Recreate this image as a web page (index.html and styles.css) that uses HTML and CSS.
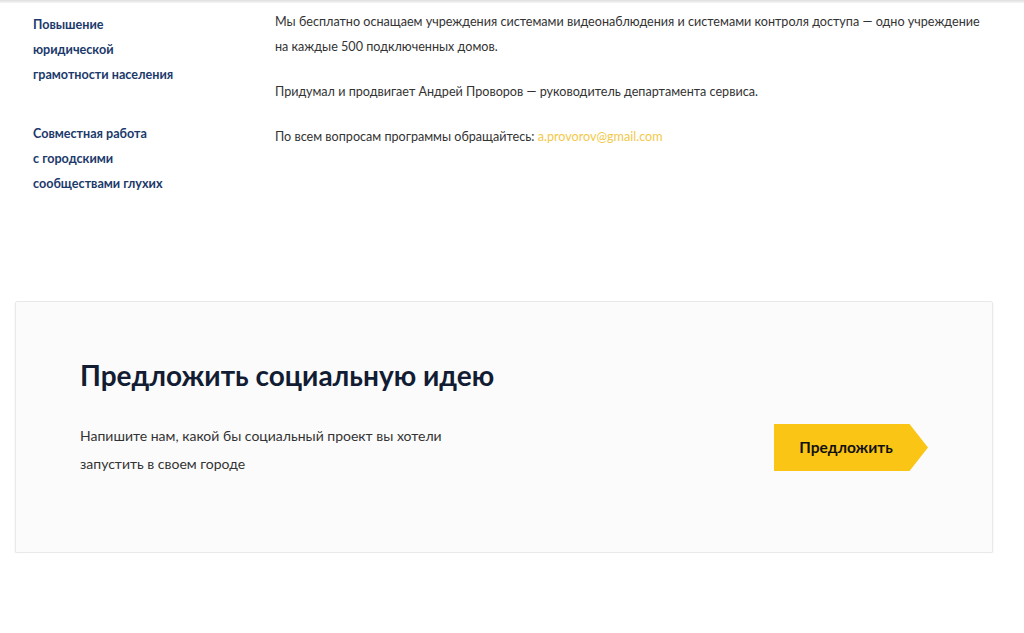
FILE: index.html
```html
<!DOCTYPE html>
<html>
	<head>
		<meta charset="utf-8">
		<title>Социальные проекты</title>
		<link rel="stylesheet" href="styles.css">
	</head>
	<body>
		<!-- тень от шапки -->
		<div class="topShadow"></div>

		<!-- описание проекта -->
		<div class="info">
			<div class="infoTags">
				<div class="tag">Повышение<br>юридической<br>грамотности населения</div>
				<div class="tag">Совместная работа<br>с городскими<br>сообществами глухих</div>
			</div>
			<div class="infoText">
				<p>Мы бесплатно оснащаем учреждения системами видеонаблюдения и системами контроля доступа — одно учреждение на каждые 500 подключенных домов.</p>
				<p>Придумал и продвигает Андрей Проворов — руководитель департамента сервиса.</p>
				<p>По всем вопросам программы обращайтесь: <a href="javascript:;">a.provorov@gmail.com</a></p>
			</div>
		</div>

		<!-- блок предложения идеи -->
		<div class="idea">
			<div class="ideaText">
				<h2>Предложить социальную идею</h2>
				<p>Напишите нам, какой бы социальный проект вы хотели запустить в своем городе</p>
			</div>
			<a class="ideaBtn" href="javascript:;">Предложить</a>
		</div>
	</body>
</html>
```

FILE: styles.css
```css
*{
	margin: 0px;padding: 0px;
}
body{
	background-color: #fff;
	font-family: Lato, "Open Sans", sans-serif;
	color: #333;
}
.topShadow{
	height: 3px;
	background: linear-gradient(#dedede, #f6f6f6);
}

/* верхняя часть: теги слева, текст справа */
.info{
	display: grid;
	grid-template-columns: 242px 1fr;
	padding: 6px 30px 0 33px;
}
.infoTags{
	padding-top: 3px;
}
.tag{
	font-weight: bold;
	font-size: 12.6px;
	line-height: 25px;
	color: #1b3a6b;
	margin-bottom: 34px;
}
.infoText p{
	font-size: 12.6px;
	line-height: 25px;
	margin-bottom: 20px;
}
.infoText a{
	color: #f3c94a;
	text-decoration: none;
}

/* карточка */
.idea{
	display: flex;
	justify-content: space-between;
	align-items: flex-start;
	margin: 71px 31px 0 15px;
	padding: 57px 64px 74px 64px;
	background-color: #fbfbfb;
	border: 1px solid #e9e9e9;
	border-radius: 2px;
	box-shadow: 0 2px 2px rgba(0,0,0,0.08);
}
.ideaText h2{
	font-size: 28px;
	line-height: 32px;
	font-weight: bold;
	color: #121c33;
	margin-bottom: 31px;
}
.ideaText p{
	font-size: 14px;
	line-height: 28px;
	max-width: 370px;
}
/* жёлтая кнопка-стрелка */
.ideaBtn{
	display: block;
	margin-top: 65px;
	width: 154px;
	height: 47px;
	line-height: 47px;
	padding-right: 10px;
	box-sizing: border-box;
	text-align: center;
	font-weight: bold;
	font-size: 15.5px;
	color: #111;
	text-decoration: none;
	background-color: #fac514;
	clip-path: polygon(0 0, 88% 0, 100% 50%, 88% 100%, 0 100%);
}
```
